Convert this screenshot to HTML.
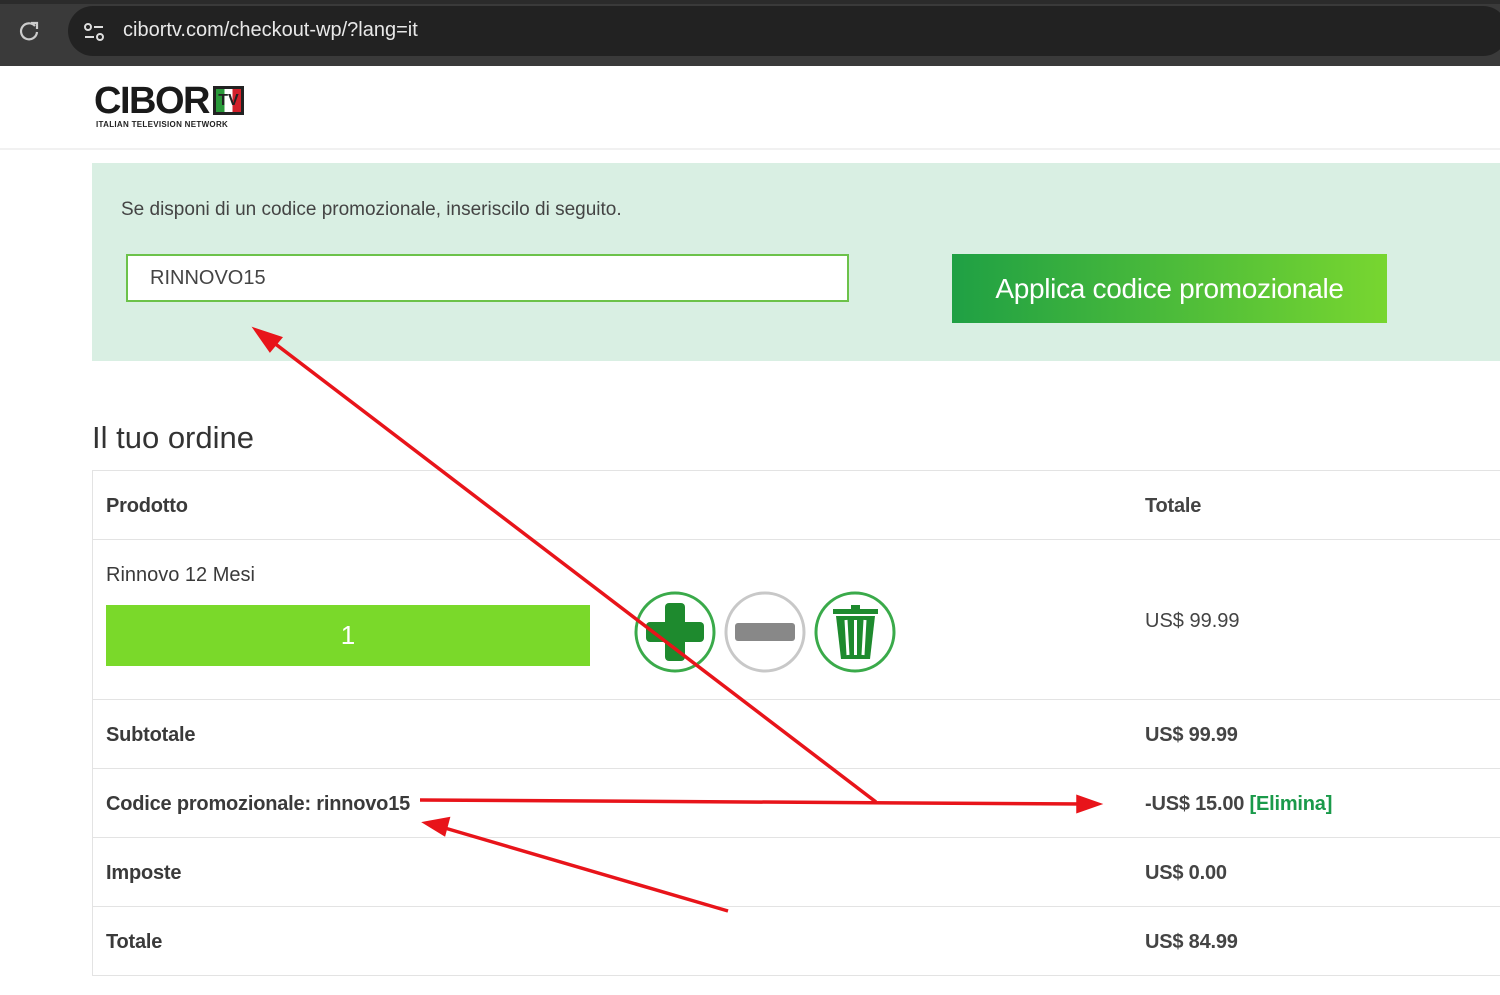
<!DOCTYPE html>
<html><head><meta charset="utf-8"><style>
*{margin:0;padding:0;box-sizing:border-box}
body{width:1500px;height:995px;overflow:hidden;background:#fff;font-family:"Liberation Sans",sans-serif;position:relative;color:#333}
.bar{position:absolute;left:0;top:0;width:1500px;height:66px;background:#3a3a3a}
.bar .top{position:absolute;top:0;left:0;width:1500px;height:4px;background:#2b2b2b}
.pill{position:absolute;left:68px;top:6px;width:1440px;height:50px;border-radius:25px;background:#222}
.url{position:absolute;left:123px;top:19px;color:#e8e8e8;font-size:20px}
.hdr{position:absolute;left:0;top:66px;width:1500px;height:84px;border-bottom:2px solid #f1f1f1}
.abs{position:absolute}
.promo{position:absolute;left:92px;top:163px;width:1408px;height:198px;background:#d9efe3}
.row{position:absolute;left:92px;width:1408px;border-top:1px solid #e3e3e3;border-left:1px solid #e3e3e3}
.lbl{position:absolute;left:13px;font-size:20px;color:#3a3a3a}
.val{position:absolute;left:1052px;font-size:20px;color:#444}
b{font-weight:bold;letter-spacing:-0.2px}
</style></head><body>
<div class="bar"><div class="top"></div><div class="pill"></div>
<svg class="abs" style="left:18px;top:20px" width="22" height="22" viewBox="0 0 22 22"><path d="M17 6A8 8 0 1 0 19 12" fill="none" stroke="#ccc" stroke-width="2.2"/><path d="M13 3h6v6" fill="none" stroke="#ccc" stroke-width="2.2"/></svg>
<svg class="abs" style="left:82px;top:20px" width="24" height="24" viewBox="0 0 24 24" fill="none" stroke="#ddd" stroke-width="2"><circle cx="6" cy="7" r="3"/><path d="M12 7h9M3 17h9"/><circle cx="18" cy="17" r="3"/></svg>
<div class="url">cibortv.com/checkout-wp/?lang=it</div></div>
<div class="hdr"></div>
<div class="abs" style="left:94px;top:80px;font-size:38px;font-weight:bold;color:#1a1a1a;letter-spacing:-1.5px">CIBOR</div>
<div class="abs" style="left:213px;top:86px;width:31px;height:29px;border:3px solid #222;background:linear-gradient(90deg,#2a9a3a 33%,#fff 33%,#fff 66%,#d3202a 66%);font-size:16px;font-weight:bold;text-align:center;line-height:23px;color:#222">TV</div>
<div class="abs" style="left:96px;top:120px;font-size:8px;font-weight:bold;color:#222;letter-spacing:0.3px">ITALIAN TELEVISION NETWORK</div>
<div class="promo"></div>
<div class="abs" style="left:121px;top:199px;font-size:19px;color:#444">Se disponi di un codice promozionale, inseriscilo di seguito.</div>
<div class="abs" style="left:126px;top:254px;width:723px;height:48px;border:2px solid #6cc24a;background:#fff;padding:11px 22px;font-size:20px;color:#444">RINNOVO15</div>
<div class="abs" style="left:952px;top:254px;width:435px;height:69px;background:linear-gradient(90deg,#1fa044,#78d630);color:#fff;font-size:28px;text-align:center;line-height:69px;letter-spacing:-0.3px">Applica codice promozionale</div>
<div class="abs" style="left:92px;top:420px;font-size:31px;color:#333">Il tuo ordine</div>
<div class="row" style="top:470px;height:69px"><div class="lbl" style="top:24px"><b>Prodotto</b></div><div class="val" style="top:24px"><b>Totale</b></div></div>
<div class="row" style="top:539px;height:160px"><div class="lbl" style="top:24px">Rinnovo 12 Mesi</div><div class="val" style="top:70px">US$ 99.99</div>
<div class="abs" style="left:13px;top:65px;width:484px;height:61px;background:#7ad92a;color:#fff;font-size:26px;text-align:center;line-height:61px">1</div></div>
<div class="row" style="top:699px;height:69px"><div class="lbl" style="top:24px"><b>Subtotale</b></div><div class="val" style="top:24px"><b>US$ 99.99</b></div></div>
<div class="row" style="top:768px;height:69px"><div class="lbl" style="top:24px"><b>Codice promozionale: rinnovo15</b></div><div class="val" style="top:24px"><b>-US$ 15.00 <span style="color:#1a9a4a">[Elimina]</span></b></div></div>
<div class="row" style="top:837px;height:69px"><div class="lbl" style="top:24px"><b>Imposte</b></div><div class="val" style="top:24px"><b>US$ 0.00</b></div></div>
<div class="row" style="top:906px;height:70px;border-bottom:1px solid #e3e3e3"><div class="lbl" style="top:24px"><b>Totale</b></div><div class="val" style="top:24px"><b>US$ 84.99</b></div></div>
<svg class="abs" style="left:0;top:0" width="1500" height="995">
<circle cx="675" cy="632" r="39" fill="#fff" stroke="#3aaa4a" stroke-width="3"/>
<rect x="665" y="603" width="20" height="58" rx="4" fill="#1e8a2e"/><rect x="646" y="622" width="58" height="20" rx="4" fill="#1e8a2e"/>
<circle cx="765" cy="632" r="39" fill="#fff" stroke="#c8c8c8" stroke-width="3"/>
<rect x="735" y="623" width="60" height="18" rx="3" fill="#888"/>
<circle cx="855" cy="632" r="39" fill="#fff" stroke="#3aaa4a" stroke-width="3"/>
<rect x="833" y="609" width="45" height="5" fill="#1e8a2e"/><rect x="851" y="605" width="9" height="6" fill="#1e8a2e"/>
<path d="M836 616h39l-5 43h-29z" fill="#1e8a2e"/>
<path d="M846 620l2 35M855.5 620v35M865 620l-2 35" stroke="#fff" stroke-width="3"/>
<g stroke="#e8141a" stroke-width="3.5" fill="#e8141a">
<line x1="876" y1="802" x2="265" y2="336"/><polygon points="256,330 280,338 270,350"/>
<line x1="420" y1="800" x2="1085" y2="804"/><polygon points="1098,804 1078,797 1078,811"/>
<line x1="728" y1="911" x2="438" y2="826"/><polygon points="426,823 448,819 444,834"/>
</g></svg>
</body></html>
